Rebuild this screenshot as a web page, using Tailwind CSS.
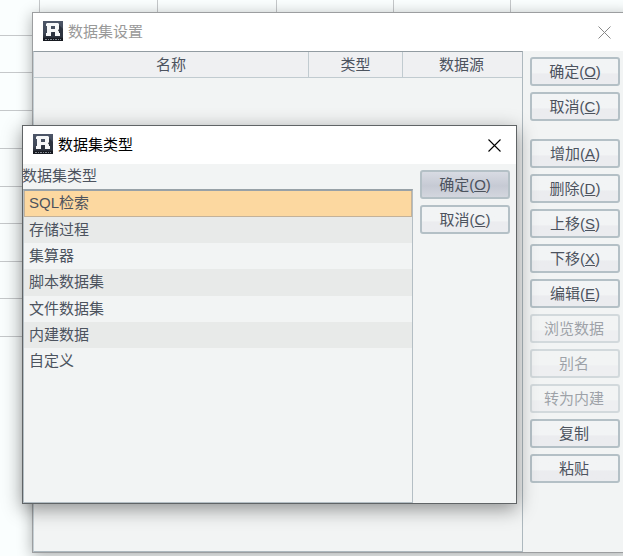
<!DOCTYPE html>
<html lang="zh-CN">
<head>
<meta charset="utf-8">
<title>数据集设置</title>
<script src="https://cdn.jsdelivr.net/npm/@tailwindcss/browser@4"></script>
</head>
<body class="relative h-[556px] w-[623px] overflow-hidden bg-[#fafefe] font-['Liberation_Sans','Noto_Sans_CJK_SC',sans-serif] text-[15px] leading-[22px] text-[#4c535e]">
<svg class="absolute size-0">
  <defs>
    <linearGradient id="lg" x1="0" y1="0" x2="0" y2="1"><stop offset="0" stop-color="#4d5668"/><stop offset=".6" stop-color="#3f4756"/><stop offset="1" stop-color="#15171e"/></linearGradient>
  </defs>
  <symbol id="logo" viewBox="0 0 20 20">
    <rect width="20" height="20" fill="url(#lg)"/>
    <path d="M16 4 20 8V16H7V14Z" fill="#2d333f"/>
    <path fill="#f6f7f8" fill-rule="evenodd" d="M4 2H15L16 3V8L15 9.500 16 10.500V12H17V15H12V11H8V15H3V12H4V5H3V3ZM8 5V8H12V5Z"/>
    <rect y="17" width="20" height="3" fill="#171a21"/>
    <path d="M2 18.500H18" stroke="#858b94" stroke-width="1" stroke-dasharray="2 1 1 1"/>
  </symbol>
</svg>

<!-- sheet behind the windows -->
<div class="grid h-[337px] grid-cols-[40px_118px_119px_117px_117px_1fr] grid-rows-[36px_37px_38px_38px_38px_37px_38px_37px_38px]">
  <div class="border-r border-b border-[#c5c8ca]"></div><div class="border-r border-[#c5c8ca]"></div><div class="border-r border-[#c5c8ca]"></div><div class="border-r border-[#c5c8ca]"></div><div class="border-r border-[#c5c8ca]"></div><div></div>
  <div class="col-span-6 border-b border-[#c5c8ca]"></div>
  <div class="col-span-6 border-b border-[#c5c8ca]"></div>
  <div class="col-span-6 border-b border-[#c5c8ca]"></div>
  <div class="col-span-6 border-b border-[#c5c8ca]"></div>
  <div class="col-span-6 border-b border-[#c5c8ca]"></div>
  <div class="col-span-6 border-b border-[#c5c8ca]"></div>
  <div class="col-span-6 border-b border-[#c5c8ca]"></div>
  <div class="col-span-6 border-b border-[#c5c8ca]"></div>
</div>

<!-- settings window -->
<section class="absolute top-[12px] left-[32px] flex h-[541px] w-[600px] flex-col border border-[#9c9ea0] bg-[#f2f4f4] shadow-[0_3px_14px_rgba(0,0,0,0.32)]">
  <header class="flex h-[38px] shrink-0 items-center bg-white pr-[20px] pl-[10px] text-[#999]">
    <svg class="mr-[5px] mb-[2px] size-5"><use href="#logo"/></svg>
    <span class="pb-[2px] font-['Noto_Sans_CJK_SC',sans-serif]">数据集设置</span>
    <svg class="ml-auto size-[13px]" viewBox="0 0 13 13" fill="none" stroke="#888" stroke-width="1"><path d="M.5.5 12.500 12.500M12.500.5.5 12.500"/></svg>
  </header>
  <div class="flex flex-1">
    <div class="w-[490px] border border-t-[#929ca2] border-r-[#adb8be] border-b-[#adb8be] border-l-[#c5cfd4]">
      <div class="grid h-[26px] grid-cols-[275px_94px_1fr] border-b border-[#c1cbd0] bg-[#eff0f2] text-center leading-[26px]">
        <div class="border-r border-[#c1cbd0]">名称</div>
        <div class="border-r border-[#c1cbd0]">类型</div>
        <div class="pr-[2px]">数据源</div>
      </div>
    </div>
    <nav class="ml-[7px] flex w-[90px] flex-col gap-[6px] pt-[6px] text-center *:h-[29px] *:rounded-[3px] *:border-2 *:border-[#b4c0c6] *:bg-linear-to-b *:from-[#f2f4f5] *:from-55% *:to-[#ebecef] *:to-60% *:leading-[25px]">
      <button>确定(<u>O</u>)</button>
      <button>取消(<u>C</u>)</button>
      <button class="mt-[12px]">增加(<u>A</u>)</button>
      <button>删除(<u>D</u>)</button>
      <button>上移(<u>S</u>)</button>
      <button>下移(<u>X</u>)</button>
      <button>编辑(<u>E</u>)</button>
      <button class="pr-[2px] opacity-50">浏览数据</button>
      <button class="pr-[2px] opacity-50">别名</button>
      <button class="pr-[2px] opacity-50">转为内建</button>
      <button class="pr-[2px]">复制</button>
      <button class="pr-[2px]">粘贴</button>
    </nav>
  </div>
</section>

<!-- type picker dialog -->
<section class="absolute top-[125px] left-[22px] flex h-[379px] w-[495px] flex-col border border-[#606466] bg-[#f2f4f4] shadow-[0_5px_18px_rgba(0,0,0,0.42)]">
  <header class="flex h-[38px] shrink-0 items-center bg-white pr-[15px] pl-[10px] text-black">
    <svg class="mr-[5px] mb-[2px] size-5"><use href="#logo"/></svg>
    <span class="pb-[2px] font-['Noto_Sans_CJK_SC',sans-serif]">数据集类型</span>
    <svg class="ml-auto size-[13px]" viewBox="0 0 13 13" fill="none" stroke="#000" stroke-width="1.100"><path d="M.5.5 12.500 12.500M12.500.5.5 12.500"/></svg>
  </header>
  <div class="flex flex-1">
    <div class="flex w-[390px] flex-col">
      <div class="-ml-px h-[25px] leading-[24px]">数据集类型</div>
      <ul class="flex-1 border border-t-2 border-[#b4bec4] border-t-[#98a1a7] leading-[25px] *:pl-[5px]">
        <li class="h-[26px] border border-t-0 border-[#c4b299] bg-[#fcd8a0] !pl-[4px] leading-[23px]">SQL检索</li>
        <li class="h-[26px] bg-[#e8eae9]">存储过程</li>
        <li class="h-[26px]">集算器</li>
        <li class="h-[27px] bg-[#e8eae9]">脚本数据集</li>
        <li class="h-[26px]">文件数据集</li>
        <li class="h-[26px] bg-[#e8eae9]">内建数据</li>
        <li class="h-[27px]">自定义</li>
      </ul>
    </div>
    <div class="ml-[7px] flex w-[90px] flex-col gap-[6px] pt-[6px] text-center *:h-[29px] *:rounded-[3px] *:border-2 *:border-[#b4c0c6] *:leading-[25px]">
      <button class="bg-linear-to-b from-[#d8dbe3] via-[#c6cad4] via-55% to-[#d3d6de]">确定(<u>O</u>)</button>
      <button class="bg-linear-to-b from-[#f2f4f5] from-55% to-[#ebecef] to-60%">取消(<u>C</u>)</button>
    </div>
  </div>
</section>
</body>
</html>
